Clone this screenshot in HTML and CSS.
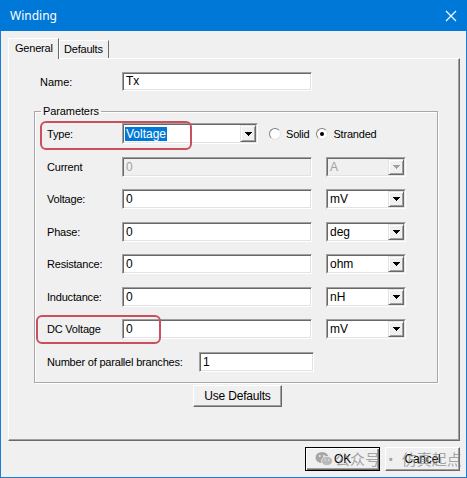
FILE: index.html
```html
<!DOCTYPE html>
<html>
<head>
<meta charset="utf-8">
<link rel="stylesheet" href="styles.css">
</head>
<body>
<div class="window">
  <div class="titlebar">
    <span class="title">Winding</span>
    <svg class="close" width="12" height="12" viewBox="0 0 12 12"><path d="M1 1L11 11M11 1L1 11" stroke="#fff" stroke-width="1.2" fill="none"/></svg>
  </div>
  <div class="client">
    <div class="tabs">
      <div class="tab active">General</div>
      <div class="tab">Defaults</div>
    </div>
    <div class="panel">
      <div class="name-row">
        <span class="name-lbl">Name:</span>
        <div class="input name-input">Tx</div>
      </div>
      <fieldset class="group">
        <legend>Parameters</legend>
        <div class="rows">
          <div class="row type-row">
            <span class="lbl">Type:</span>
            <div class="combo type-combo"><div class="combo-in"><span class="ctext"><span class="sel">Voltage</span></span><span class="dd"><svg width="7" height="4" viewBox="0 0 7 4"><path d="M0 0h7v1h-1v1h-1v1h-1v1h-1v-1h-1v-1h-1v-1h-1z" fill="#000"/></svg></span></div></div>
            <span class="radio"></span><span class="rlbl">Solid</span>
            <span class="radio on"></span><span class="rlbl">Stranded</span>
            <span class="hl hl-type"></span>
          </div>
          <div class="row">
            <span class="lbl">Current</span>
            <div class="input field disabled">0</div>
            <div class="combo unit disabled"><div class="combo-in"><span class="ctext">A</span><span class="dd"><svg width="7" height="4" viewBox="0 0 7 4"><path d="M0 0h7v1h-1v1h-1v1h-1v1h-1v-1h-1v-1h-1v-1h-1z" fill="#a0a0a0"/></svg></span></div></div>
          </div>
          <div class="row">
            <span class="lbl">Voltage:</span>
            <div class="input field">0</div>
            <div class="combo unit"><div class="combo-in"><span class="ctext">mV</span><span class="dd"><svg width="7" height="4" viewBox="0 0 7 4"><path d="M0 0h7v1h-1v1h-1v1h-1v1h-1v-1h-1v-1h-1v-1h-1z" fill="#000"/></svg></span></div></div>
          </div>
          <div class="row">
            <span class="lbl">Phase:</span>
            <div class="input field">0</div>
            <div class="combo unit"><div class="combo-in"><span class="ctext">deg</span><span class="dd"><svg width="7" height="4" viewBox="0 0 7 4"><path d="M0 0h7v1h-1v1h-1v1h-1v1h-1v-1h-1v-1h-1v-1h-1z" fill="#000"/></svg></span></div></div>
          </div>
          <div class="row">
            <span class="lbl">Resistance:</span>
            <div class="input field">0</div>
            <div class="combo unit"><div class="combo-in"><span class="ctext">ohm</span><span class="dd"><svg width="7" height="4" viewBox="0 0 7 4"><path d="M0 0h7v1h-1v1h-1v1h-1v1h-1v-1h-1v-1h-1v-1h-1z" fill="#000"/></svg></span></div></div>
          </div>
          <div class="row">
            <span class="lbl">Inductance:</span>
            <div class="input field">0</div>
            <div class="combo unit"><div class="combo-in"><span class="ctext">nH</span><span class="dd"><svg width="7" height="4" viewBox="0 0 7 4"><path d="M0 0h7v1h-1v1h-1v1h-1v1h-1v-1h-1v-1h-1v-1h-1z" fill="#000"/></svg></span></div></div>
          </div>
          <div class="row">
            <span class="lbl">DC Voltage</span>
            <div class="input field">0</div>
            <div class="combo unit"><div class="combo-in"><span class="ctext">mV</span><span class="dd"><svg width="7" height="4" viewBox="0 0 7 4"><path d="M0 0h7v1h-1v1h-1v1h-1v1h-1v-1h-1v-1h-1v-1h-1z" fill="#000"/></svg></span></div></div>
            <span class="hl hl-dc"></span>
          </div>
          <div class="row">
            <span class="lbl long">Number of parallel branches:</span>
            <div class="input branches">1</div>
          </div>
        </div>
      </fieldset>
      <div class="defaults-row">
        <button class="btn use-defaults">Use Defaults</button>
      </div>
    </div>
    <div class="footer">
      <button class="btn ok">OK</button>
      <button class="btn cancel">Cancel</button>
    </div>
  </div>
  <div class="watermark">
    <svg width="18" height="16" viewBox="0 0 18 16"><ellipse cx="7" cy="6.5" rx="6.5" ry="5.5" fill="#9a9a9a"/><ellipse cx="12" cy="10" rx="5.5" ry="4.6" fill="#b0b0b0" stroke="#f0f0f0" stroke-width="0.8"/><circle cx="4.8" cy="5" r="0.9" fill="#f0f0f0"/><circle cx="9" cy="5" r="0.9" fill="#f0f0f0"/><circle cx="10.3" cy="9" r="0.7" fill="#f0f0f0"/><circle cx="13.7" cy="9" r="0.7" fill="#f0f0f0"/></svg>
    <span>公众号 · 仿真起点</span>
  </div>
</div>
</body>
</html>
```

FILE: styles.css
```css
* { box-sizing: border-box; }
body {
  margin: 0;
  font-family: "Liberation Sans", Arial, sans-serif;
  font-size: 11px;
  color: #000;
  background: #fff;
}
.window {
  width: 467px;
  height: 478px;
  background: #f0f0f0;
  border: 1px solid #1a7fd4;
  border-top: 0;
  position: relative;
}
.titlebar {
  height: 31px;
  margin: 0 -1px;
  background: #0078d7;
  color: #fff;
  display: flex;
  align-items: center;
  justify-content: space-between;
  padding: 0 10px 0 10px;
  font-family: "Noto Sans", sans-serif;
  font-size: 12px;
}
.title { margin-top: -1px; }
.close { margin-right: 0; }
.client {
  padding: 7px 6px 0 7px;
}
.tabs {
  display: flex;
  align-items: flex-end;
  height: 20px;
}
.tab {
  height: 18px;
  width: 50px;
  padding: 2px 0 0 4px;
  border: 1px solid;
  border-color: #fff #696969 transparent #fff;
  border-bottom: 0;
  letter-spacing: -0.2px;
}
.tab.active {
  width: 51px;
  height: 21px;
  margin-bottom: -1px;
  padding: 3px 0 0 6px;
  background: #f0f0f0;
  position: relative;
  z-index: 1;
}
.panel {
  width: 452px;
  height: 383px;
  border: 1px solid;
  border-color: #fff #696969 #696969 #fff;
  box-shadow: inset -1px -1px 0 #a0a0a0;
}
.name-row {
  display: flex;
  align-items: center;
  margin-top: 13px;
  padding-left: 31px;
}
.name-lbl { width: 82px; }
.input {
  height: 20px;
  background: #fff;
  border: 1px solid;
  border-color: #a0a0a0 #fff #fff #a0a0a0;
  box-shadow: inset 1px 1px 0 #696969, inset -1px -1px 0 #e3e3e3;
  padding: 0 0 0 3px;
  line-height: 18px;
  font-size: 12px;
}
.name-input { width: 190px; height: 19px; line-height: 17px; }
.group {
  margin: 13px 0 0 25px;
  width: 404px;
  height: 279px;
  min-width: 0;
  padding: 5px 0 0 12px;
  border: 1px solid #a8a8a8;
  box-shadow: 1px 1px 0 #fff, inset 1px 1px 0 #fff;
}
.group legend {
  padding: 0 2px;
  margin-left: -6px;
  line-height: 14px;
  font-size: 11px;
  letter-spacing: -0.1px;
}
.rows {
  display: flex;
  flex-direction: column;
  gap: 12.5px;
}
.row {
  display: flex;
  align-items: center;
  height: 20px;
  position: relative;
}
.type-row { height: 21px; }
.lbl {
  width: 75px;
  letter-spacing: -0.2px;
}
.lbl.long { width: 152px; }
.field { width: 190px; }
.field.disabled, .combo.disabled .combo-in { background: #f0f0f0; color: #a0a0a0; }
.branches { width: 115px; }
.combo {
  height: 20px;
  border: 1px solid;
  border-color: #a0a0a0 #fff #fff #a0a0a0;
}
.combo-in {
  height: 100%;
  display: flex;
  background: #fff;
  border: 1px solid;
  border-color: #696969 #e3e3e3 #e3e3e3 #696969;
}
.ctext {
  flex: 1;
  padding-left: 2px;
  line-height: 16px;
  font-size: 12px;
}
.unit { width: 80px; margin-left: 14px; }
.type-combo { width: 136px; height: 21px; }
.type-combo .ctext { padding-left: 1px; padding-top: 1px; }
.sel {
  display: inline-block;
  background: #0078d7;
  color: #fff;
  line-height: 14px;
  padding: 0 1px;
}
.dd {
  width: 16px;
  height: 100%;
  background: #f0f0f0;
  border: 1px solid;
  border-color: #e3e3e3 #696969 #696969 #e3e3e3;
  box-shadow: inset 1px 1px 0 #fff, inset -1px -1px 0 #a0a0a0;
  display: flex;
  align-items: center;
  justify-content: center;
}
.radio {
  width: 12px;
  height: 12px;
  border-radius: 50%;
  background: #fff;
  border: 1px solid;
  border-color: #808080 #e3e3e3 #e3e3e3 #808080;
  margin-left: 11px;
  display: flex;
  align-items: center;
  justify-content: center;
}
.radio + .rlbl { margin-left: 5px; }
.rlbl { letter-spacing: -0.2px; }
.radio.on::after {
  content: "";
  width: 4px;
  height: 4px;
  border-radius: 50%;
  background: #000;
}
.rlbl + .radio { margin-left: 7px; }
.hl {
  position: absolute;
  border: 2px solid #c9505c;
  border-radius: 6px;
  pointer-events: none;
}
.hl-type { left: -7px; top: -2px; width: 152px; height: 29px; }
.hl-dc { left: -11px; top: -4px; width: 125px; height: 29px; }
.defaults-row {
  padding-left: 184px;
  margin-top: 2px;
}
.btn {
  font-family: "Liberation Sans", Arial, sans-serif;
  font-size: 12px;
  color: #000;
  background: #f0f0f0;
  border: 1px solid;
  border-color: #fff #696969 #696969 #fff;
  box-shadow: inset -1px -1px 0 #a0a0a0;
  padding: 0;
  letter-spacing: -0.2px;
}
.use-defaults { width: 89px; height: 22px; }
.footer {
  display: flex;
  justify-content: flex-end;
  gap: 5px;
  margin-top: 6px;
}
.ok, .cancel { width: 75px; height: 24px; }
.ok {
  border: 1px solid #000;
  box-shadow: inset 1px 1px 0 #fff, inset -1px -1px 0 #696969, inset -2px -2px 0 #a0a0a0;
}
.watermark {
  position: absolute;
  left: 314px;
  top: 450px;
  display: flex;
  align-items: center;
  gap: 2px;
  color: rgba(130, 130, 130, 0.7);
  font-family: "Noto Sans CJK SC", sans-serif;
  font-size: 15px;
  line-height: 18px;
  pointer-events: none;
}
.watermark svg { opacity: 0.85; }
```
